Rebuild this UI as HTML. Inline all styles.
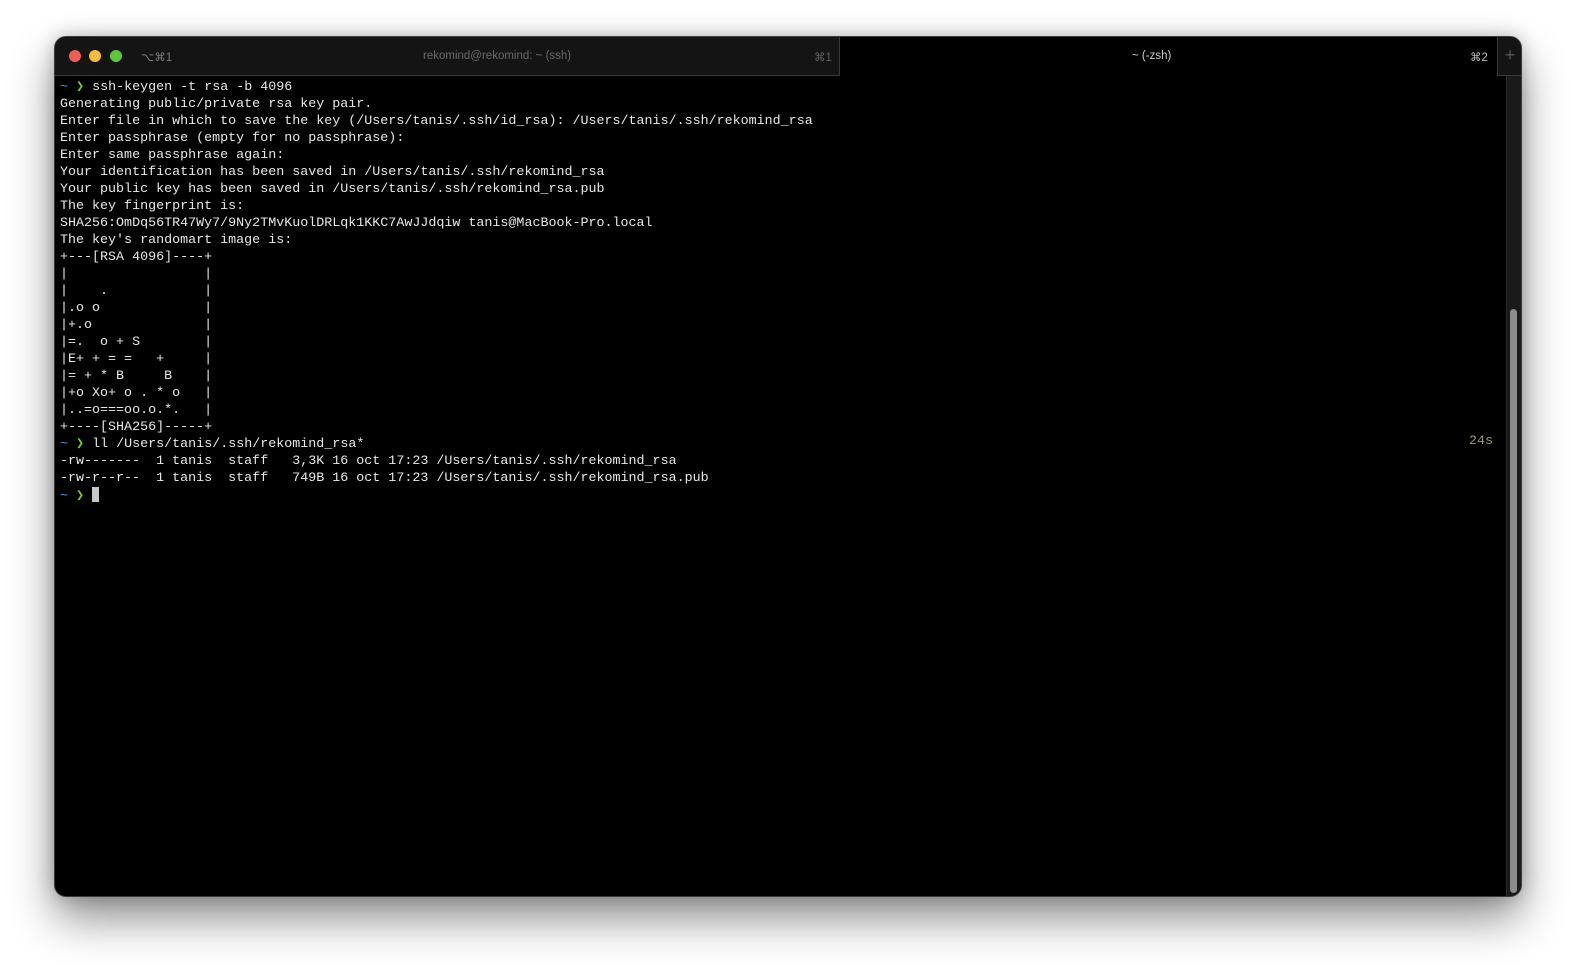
<!DOCTYPE html>
<html><head><meta charset="utf-8"><style>
html,body{margin:0;padding:0;background:#fff;width:1577px;height:970px;overflow:hidden}
.win{position:absolute;left:55px;top:37px;width:1466px;height:859px;background:#000;border-radius:11px;
 box-shadow:0 0 0 1px #3c3c3c,0 22px 45px rgba(0,0,0,.45),0 0 18px rgba(0,0,0,.25);overflow:hidden}
.tab1{position:absolute;left:0;top:0;width:784px;height:38px;background:#141414;border-right:1px solid #3a3a3a;border-bottom:1px solid #3a3a3a}
.tl{position:absolute;top:13px;width:12px;height:12px;border-radius:50%}
.t{position:absolute;font-family:"Liberation Sans",sans-serif;font-size:11.5px;color:#6e6e6e;top:13px}
.plus{position:absolute;left:1442px;top:0;width:24px;height:38px;background:#141414;border-left:1px solid #3a3a3a;border-bottom:1px solid #3a3a3a;color:#555;font:300 18px "Liberation Sans",sans-serif;text-align:center;line-height:36px}
.track{position:absolute;left:1451px;top:39px;width:15px;height:820px;background:#1a1a1a;border-left:1px solid #2a2a2a}
.thumb{position:absolute;left:1455px;top:272px;width:7px;height:584px;background:#8c8c8c;border-radius:4px}
pre{position:absolute;left:5px;top:42px;margin:0;font-family:"Liberation Mono",monospace;font-size:13.35px;line-height:17px;color:#e8e8e8}
.b{color:#3fa7e6}.g{color:#74d11f}
.cur{display:inline-block;width:7px;height:15px;background:#c8c8c8;vertical-align:-3px}
.tm{position:absolute;left:1414px;top:397px;font-family:"Liberation Mono",monospace;font-size:13.35px;color:#9b9a6e}
</style></head><body>
<div class="win">
 <div class="tab1"></div>
 <div class="tl" style="left:14px;background:#ed5f57"></div>
 <div class="tl" style="left:34px;background:#f4bd3b"></div>
 <div class="tl" style="left:55px;background:#5ac73f"></div>
 <div class="t" style="left:86px;color:#7a7a7a">⌥⌘1</div>
 <div class="t" style="left:368px;color:#6a6a6a">rekomind@rekomind: ~ (ssh)</div>
 <div class="t" style="left:759px;color:#5e5e5e">⌘1</div>
 <div class="t" style="left:1077px;color:#cfcfcf">~ (-zsh)</div>
 <div class="t" style="left:1415px;color:#bdbdbd">⌘2</div>
 <div class="plus">+</div>
 <div class="track"></div>
 <div class="thumb"></div>
<pre><span class="b">~</span> <span class="g">❯</span> ssh-keygen -t rsa -b 4096
Generating public/private rsa key pair.
Enter file in which to save the key (/Users/tanis/.ssh/id_rsa): /Users/tanis/.ssh/rekomind_rsa
Enter passphrase (empty for no passphrase):
Enter same passphrase again:
Your identification has been saved in /Users/tanis/.ssh/rekomind_rsa
Your public key has been saved in /Users/tanis/.ssh/rekomind_rsa.pub
The key fingerprint is:
SHA256:OmDq56TR47Wy7/9Ny2TMvKuolDRLqk1KKC7AwJJdqiw tanis@MacBook-Pro.local
The key's randomart image is:
+---[RSA 4096]----+
|                 |
|    .            |
|.o o             |
|+.o              |
|=.  o + S        |
|E+ + = =   +     |
|= + * B     B    |
|+o Xo+ o . * o   |
|..=o===oo.o.*.   |
+----[SHA256]-----+
<span class="b">~</span> <span class="g">❯</span> ll /Users/tanis/.ssh/rekomind_rsa*
-rw-------  1 tanis  staff   3,3K 16 oct 17:23 /Users/tanis/.ssh/rekomind_rsa
-rw-r--r--  1 tanis  staff   749B 16 oct 17:23 /Users/tanis/.ssh/rekomind_rsa.pub
<span class="b">~</span> <span class="g">❯</span> <span class="cur"></span></pre>
 <div class="tm">24s</div>
</div>
</body></html>
